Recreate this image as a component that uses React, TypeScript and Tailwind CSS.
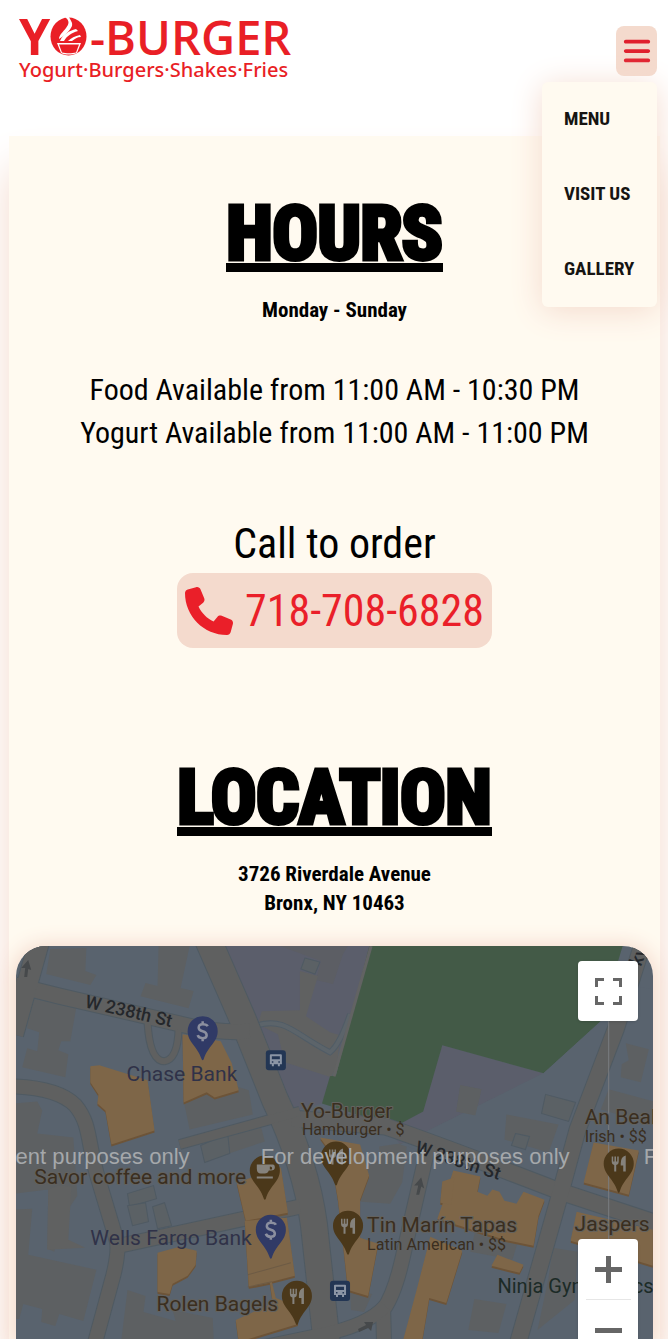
import { FaBars, FaPhone } from "react-icons/fa6";

const body = "font-['Roboto_Condensed',Roboto,sans-serif]";

const links = ["MENU", "VISIT US", "GALLERY"];

const heading =
  "border-b-[9px] border-black text-[75px] leading-[60px] font-bold [-webkit-text-stroke:5px_black]";

function Logo() {
  return (
    <svg viewBox="0 0 280 68" className="h-[68px] w-[280px] overflow-visible" fill="#e91f26" role="img" aria-label="Yo-Burger">
      <text x="3" y="43" className="font-['Open_Sans',sans-serif] text-[50px] font-bold">Y</text>
      <ellipse cx="52.500" cy="24.500" rx="18" ry="19" />
      <path d="M49 5c5 4 4 7 1 11-3 4-7 7-7 11 5-3 11-8 13-13 1-4-2-6-3-9z" fill="#fff" />
      <path d="M44 29c3-7 9-10 16-12l2 2c-7 2-11 5-14 10zM52 29c3-3 7-5 12-6l1 2c-4 0-6 2-9 4zM41 31h24l-4 10c-5 2-12 2-16 0z" fill="#fff" />
      <path d="M43 32.500h20l-3 8c-4 1-10 1-14 0z" />
      <text x="74" y="43" className="font-['Open_Sans',sans-serif] text-[47px] font-semibold">-BURGER</text>
      <text x="3" y="65" className="font-['Noto_Sans','Open_Sans',sans-serif] text-[20px] font-medium">Yogurt·Burgers·Shakes·Fries</text>
    </svg>
  );
}

const roads = [
  { d: "M208 940L243 1020L275 1100Q306 1165 314 1225L327 1345", w: 26 },
  { d: "M16 986L60 997L190 1027Q220 1034 250 1032", w: 15 },
  { d: "M42 935L14 1035", w: 20 },
  { d: "M10 1087Q58 1088 76 1106C92 1125 88 1145 99 1180L117 1240Q120 1250 114 1275L95 1345", w: 14 },
  { d: "M120 1246L300 1207", w: 14 },
  { d: "M292 1119L385 1127Q430 1142 560 1192L660 1225", w: 16 },
  { d: "M645 935L615 1030L577 1130L558 1200L517 1345", w: 16 },
  { d: "M430 1138L402 1260Q394 1295 383 1310L384 1345", w: 14 },
  { d: "M385 1306Q368 1325 325 1334L210 1358", w: 13 },
  { d: "M180 1145L300 1112", w: 9 },
];

const buildings = [
  "M51 950L87 949L86 972L97 976L91 986L47 975Z",
  "M159 947L190 947L181 989L194 992L189 1009L141 997L146 984L158 987Z",
  "M31 999L77 1008L71 1042L62 1042L59 1051L69 1055L66 1078L23 1068L28 1049L38 1052L40 1033L28 1029Z",
  "M16 1104L38 1102L43 1111L38 1134L74 1138L78 1196L62 1220L55 1252L48 1249L49 1190L16 1194Z",
  "M16 1210L33 1209L29 1255L97 1270L84 1321L60 1314L56 1326L42 1322L43 1309L24 1304L20 1319L16 1319Z",
  "M184 1101L230 1085L249 1091L253 1115L190 1130Z",
  "M206 1138L260 1123L265 1142L208 1161Z",
  "M128 1290L146 1296L144 1312L176 1321L173 1310L213 1318L214 1339L122 1339Z",
  "M362 1170L380 1160L379 1147L407 1143L402 1183L390 1204L361 1202Z",
  "M460 1086L481 1090L475 1116L456 1112Z",
  "M625 1044L648 1050L640 1083L620 1078L621 1065L628 1061Z",
  "M506 1115L558 1125L548 1153L504 1140Z",
  "M552 1248L577 1252L574 1300L537 1330L548 1278Z",
  "M350 1290L372 1294L364 1312L351 1310Z",
  "M477 1222L520 1233L512 1260L470 1252Z",
  "M474 1299L506 1304L498 1333L468 1330Z",
  "M638 992L653 990L653 1028L639 1025Z",
];

const outlined = [
  "M545 1095L575 1103L568 1122L541 1114Z",
  "M128 1194L154 1186L157 1199L130 1207Z",
  "M128 1206L146 1203L149 1222L133 1226Z",
  "M153 1207L165 1203L172 1226L158 1229Z",
  "M201 1146L228 1134L230 1154L205 1163Z",
  "M305 959L320 963L315 975L301 970Z",
  "M515 1134L529 1137L525 1150L511 1146Z",
];

const shops = [
  "M91 1067L100 1066L148 1081L155 1131L112 1145L106 1111L98 1104L99 1095L91 1083Z",
  "M183 1035L221 1042L232 1064L239 1091L215 1098L207 1093L184 1103Z",
  "M237 1183L281 1168L288 1213L246 1221Z",
  "M245 1221L287 1218L295 1276L272 1282L276 1298L299 1307L298 1324L239 1342L236 1320L273 1303L270 1283L249 1287Z",
  "M320 1138L360 1145L369 1176L360 1200L360 1238L378 1244L368 1296L348 1290L342 1235L338 1200L330 1152Z",
  "M453 1171L480 1177L477 1192L487 1196L492 1190L499 1192L504 1201L516 1204L523 1192L544 1200L538 1216L533 1246L504 1240L437 1219L442 1205Z",
  "M430 1237L462 1251L446 1303L429 1298L422 1340L403 1340L417 1288Z",
  "M497 1255L523 1265L519 1273L491 1266Z",
  "M158 1253L180 1247L197 1251L196 1265L188 1276L173 1284L170 1294L158 1292Z",
  "M593 1143L638 1151L628 1195L583 1183Z",
  "M576 1212L652 1230L652 1266L570 1241Z",
  "M442 1182L454 1178L451 1205L440 1203Z",
];

function Fork() {
  return (
    <path
      d="M-7-7v5q0 3 2.500 3.500V8h2V1.500Q0 1 0-2v-5h-1.500v5h-1.200v-5h-1.600v5h-1.200v-5zM7-8Q2-7 2 0v2h2.500v6H7z"
      fill="#85827c"
    />
  );
}

function Pin({ x, y, kind }: { x: number; y: number; kind: "food" | "cafe" | "bank" }) {
  return (
    <g transform={`translate(${x} ${y})`}>
      <path
        d="M0-15A15 15 0 0 1 15 0C15 11 5 15 1 28q-1 2-2 0C-5 15-15 11-15 0A15 15 0 0 1 0-15Z"
        fill={kind === "bank" ? "#303a66" : "#4b381a"}
      />
      {kind === "food" && <Fork />}
      {kind === "cafe" && (
        <path d="M-8-6H8q2 0 2 3t-4 3H4q-1 3-4 3h-4q-4 0-4-5zM5-4v3h2q1-3-2-3zM-8 6H8v2H-8z" fill="#85827c" fillRule="evenodd" />
      )}
      {kind === "bank" && (
        <path d="M5-5Q4-7 0-7T-4-3.500Q-4-1 0 0T4 4Q4 7 0 7T-5 4M0-10v3M0 7v3" fill="none" stroke="#8b8f9f" strokeWidth="2.500" />
      )}
    </g>
  );
}

function BusStop({ x, y }: { x: number; y: number }) {
  return (
    <g transform={`translate(${x} ${y})`}>
      <rect x="-10" y="-10" width="20" height="20" rx="3" fill="#233654" />
      <path
        d="M-5-6h10q1 0 1 1v9H4v2H2V4h-4v2h-2V4h-2v-9q0-1 1-1zm1 2v3h8v-3zM-4 1v1.500h1.500V1zm6.500 0v1.500H4V1z"
        fill="#8b95a5"
        fillRule="evenodd"
      />
    </g>
  );
}

function StreetMap() {
  return (
    <svg
      viewBox="16 947 637 392"
      preserveAspectRatio="xMidYMin slice"
      className="h-full w-full font-['Roboto',sans-serif]"
      role="img"
      aria-label="Map of Riverdale Avenue"
    >
      <rect x="16" y="947" width="637" height="392" fill="#59636e" />
      <path d="M222 940H375L322 1104L292 1112Z" fill="#5b5e6b" />
      <path d="M442 1046L543 1074L400 1145L380 1120L422 1110Z" fill="#5b5e6b" />
      <g fill="#5d6062">{buildings.map((d) => <path key={d} d={d} />)}</g>
      <path d="M280 947L348 947L343 955L333 985L316 981L321 962Z" fill="#5c5e64" />
      <path d="M300 972L318 977L306 1017L330 1033L340 1036L337 1067L331 1078L285 1063L278 1035L258 1025L262 1012L300 1011Z" fill="#606161" />
      <path d="M59 1186L72 1187L69 1240L86 1248L48 1250L49 1190Z" fill="#606161" />
      <path d="M258 1026C285 1018 295 1035 330 1053Q340 1045 350 1015" fill="none" stroke="#505c66" strokeWidth="6" />
      <path d="M258 1026C285 1018 295 1035 330 1053Q340 1045 350 1015" fill="none" stroke="#5c646a" strokeWidth="4" />
      <path d="M371 940H624L612 980L600 1022L543 1074L442 1046L423 1112L395 1127L322 1104L330 1077L336 1076Z" fill="#435a47" />
      <path d="M371 947L334 1077" stroke="#626363" strokeWidth="3" />
      <path d="M543 1074L600 1022L615 985L653 990V1230L560 1195L400 1145Z" fill="#59636e" />
      <path d="M625 1044L648 1050L640 1083L620 1078L621 1065L628 1061Z" fill="#5d6062" />
      <path d="M506 1115L558 1125L548 1153L504 1140ZM460 1086L481 1090L475 1116L456 1112ZM608 1090L653 1102V1125L600 1110Z" fill="#5d6062" />
      <g fill="#5b6165" stroke="#4f5a63" strokeWidth="1">
        {outlined.map((d) => <path key={d} d={d} />)}
      </g>
      <g fill="none" stroke="#4f5a62">
        {roads.map((r) => <path key={r.d} d={r.d} strokeWidth={r.w + 2} />)}
      </g>
      <path d="M148 1022Q150 1062 165 1062Q178 1060 179 1030" fill="none" stroke="#4f5a62" strokeWidth="8" />
      <g fill="none" stroke="#5f6060">
        {roads.map((r) => <path key={r.d} d={r.d} strokeWidth={r.w} />)}
      </g>
      <path d="M148 1022Q150 1062 165 1062Q178 1060 179 1030" fill="none" stroke="#5f6060" strokeWidth="6" />
      <g fill="#6d5438" transform="translate(0 2)">{shops.map((d) => <path key={d} d={d} />)}</g>
      <g fill="#7e6648">{shops.map((d) => <path key={d} d={d} />)}</g>
      <path d="M248 1275L291 1263M272 1282L248 1287" stroke="#6d5b45" fill="none" />
      <g fill="#46494b">
        <path d="M25 978L26 969L22 969L29 961L32 971L29 970L28 978Z" />
        <path d="M416 1195L418 1186L414 1186L421 1178L424 1189L421 1187L419 1195Z" />
        <path d="M358 1329L366 1325L364 1322L373 1322L371 1331L368 1328L359 1332Z" />
      </g>

      <g fill="#24272b" className="text-[18px] font-medium">
        <text transform="translate(85 1008) rotate(13)">W 238th St</text>
        <text transform="translate(414 1153) rotate(18)">W 238th St</text>
        <text transform="translate(640 968) rotate(-68)">ky</text>
      </g>
      <path d="M608 1022V1240" stroke="#7a7d80" />

      <Pin x={203} y={1032} kind="bank" />
      <Pin x={271} y={1230} kind="bank" />
      <Pin x={265} y={1171} kind="cafe" />
      <Pin x={336} y={1157} kind="food" />
      <Pin x={348} y={1226} kind="food" />
      <Pin x={297} y={1296} kind="food" />
      <Pin x={618} y={1164} kind="food" />
      <BusStop x={276} y={1061} />
      <BusStop x={340} y={1291} />

      <g className="text-[21px]" fill="#303248">
        <text x="127" y="1082">Chase Bank</text>
        <text x="91" y="1245">Wells Fargo Bank</text>
      </g>
      <g className="text-[21px]" fill="#3a2e20" stroke="#63625f" strokeWidth="2" paintOrder="stroke" strokeLinejoin="round">
        <text x="301" y="1119">Yo-Burger</text>
        <text x="35" y="1184">Savor coffee and more</text>
        <text x="157" y="1311">Rolen Bagels</text>
        <text x="367" y="1232">Tin Marín Tapas</text>
        <text x="584" y="1125">An Beal</text>
        <text x="574" y="1231">Jaspers</text>
      </g>
      <g className="text-[16px]" fill="#3a2e20">
        <text x="302" y="1136">Hamburger • $</text>
        <text x="367" y="1250">Latin American • $$</text>
        <text x="584" y="1143">Irish • $$</text>
      </g>
      <text x="497" y="1293" className="text-[20px]" fill="#1c2b27">Ninja Gymnastics</text>
      <g className="font-['Liberation_Sans',sans-serif] text-[22px]" fill="#a5a8ab">
        <text x="190" y="1164" textAnchor="end">For development purposes only</text>
        <text x="261" y="1164">For development purposes only</text>
        <text x="643" y="1164">For development purposes only</text>
      </g>
    </svg>
  );
}

export default function App() {
  return (
    <div className={`flex min-h-screen flex-col overflow-hidden bg-white text-black ${body}`}>
      <header className="relative z-10 flex items-start justify-between pr-[11px] pl-4">
        <a href="#home" className="mt-3 h-[124px]">
          <Logo />
        </a>
        <div className="relative pt-[26px]">
          <button
            type="button"
            aria-label="Toggle navigation"
            aria-expanded="true"
            className="flex h-[50px] w-[41px] items-center justify-center rounded-lg bg-[#f4dacd] text-[#e01f2d]"
          >
            <FaBars className="size-[30px]" />
          </button>
          <nav className="absolute top-[82px] right-0 w-[115px] rounded-md bg-[#fffaf0] shadow-[0_4px_32px_#f4dacd]">
            {links.map((label) => (
              <a
                key={label}
                href="#"
                className="flex h-[75px] items-center pl-[22px] text-[19px] font-bold whitespace-nowrap text-[#161412]"
              >
                {label}
              </a>
            ))}
          </nav>
        </div>
      </header>

      <main className="mr-[8px] ml-[9px] flex grow flex-col bg-[#fffaf0] px-[7px] text-center shadow-[0_32px_40px_#f4dacd]">
        <section className="flex flex-col items-center">
          <h1 className={`mt-[67px] ${heading}`}>HOURS</h1>
          <p className="mt-6 text-[21px] leading-[29px] font-bold">Monday - Sunday</p>
          <p className="mt-[43px] text-[30px] leading-[43px]">
            Food Available from 11:00 AM - 10:30 PM
            <br />
            Yogurt Available from 11:00 AM - 11:00 PM
          </p>
          <p className="mt-[61px] text-[42px] leading-[58px]">Call to order</p>
          <a
            href="tel:7187086828"
            className="flex h-[75px] items-center gap-3 rounded-2xl bg-[#f4dacd] px-2 text-[44px] text-[#ea1f29]"
          >
            <FaPhone className="size-12" />
            718-708-6828
          </a>
        </section>
        <section className="flex grow flex-col items-center">
          <h2 className={`mt-[119px] ${heading}`}>LOCATION</h2>
          <p className="mt-6 text-[21px] leading-[29px] font-bold">
            3726 Riverdale Avenue
            <br />
            Bronx, NY 10463
          </p>
          <div className="relative mt-7 min-h-[380px] w-full grow basis-0 overflow-hidden rounded-t-[30px] text-left shadow-[0_2px_20px_4px_#f4dacd]">
            <div className="absolute inset-0">
              <StreetMap />
            </div>
            <button
              type="button"
              aria-label="Toggle fullscreen view"
              className="absolute top-[15px] right-[15px] flex size-[60px] items-center justify-center rounded-sm bg-white shadow"
            >
              <svg viewBox="0 0 27 27" className="size-[27px]" fill="none" stroke="#666" strokeWidth="3">
                <path d="M1.500 9V1.500H9M18 1.500H25.500V9M25.500 18V25.500H18M9 25.500H1.500V18" />
              </svg>
            </button>
            <div className="absolute top-[293px] right-[15px] flex w-[60px] flex-col items-center rounded-sm bg-white shadow">
              <button type="button" aria-label="Zoom in" className="flex size-[60px] items-center justify-center">
                <svg viewBox="0 0 27 27" className="size-[27px]" fill="#666">
                  <path d="M11 0H16V11H27V16H16V27H11V16H0V11H11Z" />
                </svg>
              </button>
              <div className="h-px w-[45px] bg-[#e6e6e6]" />
              <button type="button" aria-label="Zoom out" className="flex size-[60px] items-center justify-center">
                <svg viewBox="0 0 27 27" className="size-[27px]" fill="#666">
                  <path d="M0 11H27V16H0Z" />
                </svg>
              </button>
            </div>
          </div>
        </section>
      </main>
    </div>
  );
}
